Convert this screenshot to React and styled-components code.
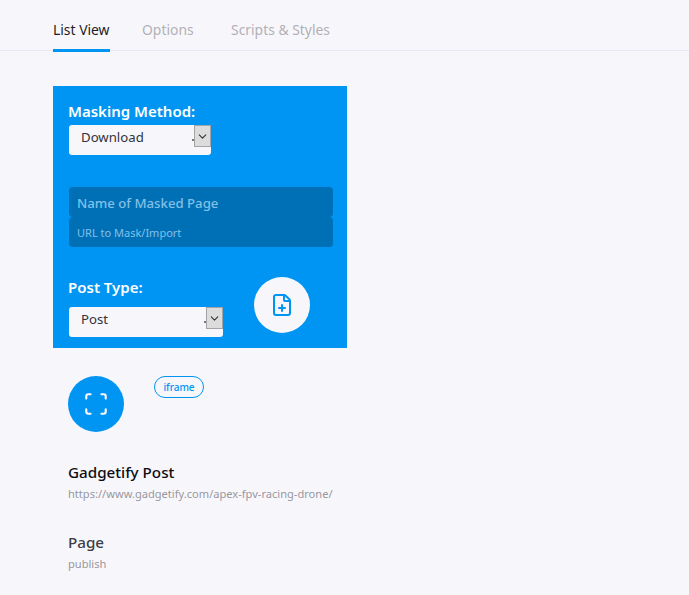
import { createGlobalStyle } from "styled-components";
import styled from "styled-components";
import { FilePlus, Scan, ChevronDown } from "lucide-react";

const GlobalStyle = createGlobalStyle`
  html, body {
    margin: 0;
    padding: 0;
    height: 100%;
    overflow: hidden;
    background: #f7f7fb;
    font-family: "Noto Sans", "Open Sans", sans-serif;
  }
`;

const BLUE = "#0095f2";

const Page = styled.div`
  width: 689px;
  height: 595px;
  padding-top: 15px;
  box-sizing: border-box;
`;

const Tabs = styled.nav`
  display: flex;
  height: 36px;
  padding-left: 53px;
  border-bottom: 1px solid #e6e6f6;
  box-sizing: border-box;
`;

const Tab = styled.div`
  width: ${(p) => p.$width}px;
  margin-right: ${(p) => p.$gap}px;
  height: 37px;
  box-sizing: border-box;
  padding-top: 5px;
  font-size: 13.9px;
  line-height: 20px;
  white-space: nowrap;
  color: ${(p) => (p.$active ? "#1d1d25" : "#b3b0b6")};
  border-bottom: ${(p) => (p.$active ? `3px solid ${BLUE}` : "none")};
`;

const Panel = styled.section`
  width: 294px;
  height: 262px;
  margin: 35px 0 0 53px;
  padding: 15px 15px 0;
  box-sizing: border-box;
  background: ${BLUE};
`;

const Label = styled.div`
  font-size: 15px;
  line-height: 20px;
  font-weight: 600;
  color: #fff;
`;

const Select = styled.div`
  position: relative;
  width: ${(p) => p.$width}px;
  height: 30px;
  margin-left: 1px;
  margin-top: ${(p) => p.$top}px;
  padding-left: 12px;
  box-sizing: border-box;
  background: #f7f7fb;
  border-radius: 3px;
  font-size: 13.2px;
  line-height: 24px;
  color: #33333b;
`;

const SelectArrow = styled.span`
  position: absolute;
  top: 0;
  right: 0;
  width: 17px;
  height: 22px;
  box-sizing: border-box;
  display: flex;
  align-items: center;
  justify-content: center;
  background: #dcdcdc;
  border: 1px solid #a4a4a4;
  color: #333;

  &::before {
    content: "";
    position: absolute;
    left: -3px;
    top: 13px;
    width: 2px;
    height: 2px;
    background: #77777d;
  }
`;

const Fields = styled.div`
  display: flex;
  flex-direction: column;
  margin: 32px 0 0 1px;
  width: 264px;
`;

const Field = styled.div`
  height: 30px;
  padding-left: 8px;
  box-sizing: border-box;
  background: #0070b6;
  border-radius: 4px;
  color: #82c0e8;
  font-size: ${(p) => p.$size}px;
  font-weight: ${(p) => p.$weight};
  line-height: 32px;
`;

const TypeRow = styled.div`
  display: flex;
  justify-content: space-between;
  align-items: flex-start;
  margin-top: 30px;
  padding-right: 22px;
`;

const CircleButton = styled.div`
  width: 56px;
  height: 56px;
  border-radius: 50%;
  display: flex;
  align-items: center;
  justify-content: center;
  flex-shrink: 0;
  background: ${(p) => (p.$filled ? BLUE : "#f7f7fb")};
  color: ${(p) => (p.$filled ? "#f7f7fb" : BLUE)};
`;

const Item = styled.div`
  margin-left: 68px;
  padding-top: 28px;
`;

const ItemHead = styled.div`
  display: flex;
  align-items: flex-start;
  gap: 30px;
`;

const Badge = styled.span`
  width: 50px;
  height: 22px;
  box-sizing: border-box;
  border: 1px solid ${BLUE};
  border-radius: 11px;
  color: ${BLUE};
  font-size: 10px;
  font-weight: 500;
  line-height: 21px;
  text-align: center;
`;

const Title = styled.div`
  margin-top: ${(p) => p.$top}px;
  font-size: 15.2px;
  line-height: 20px;
  font-weight: 500;
  color: ${(p) => p.$color};
`;

const Sub = styled.div`
  margin-top: 4px;
  font-size: 11.1px;
  line-height: 16px;
  color: #97979f;
  white-space: nowrap;
`;

export default function App() {
  return (
    <>
      <GlobalStyle />
      <Page>
        <Tabs>
          <Tab $active $width={57} $gap={32}>List View</Tab>
          <Tab $width={57} $gap={32}>Options</Tab>
          <Tab $width={100} $gap={0}>Scripts &amp; Styles</Tab>
        </Tabs>
        <Panel>
          <Label>Masking Method:</Label>
          <Select $width={142} $top={4}>
            Download
            <SelectArrow><ChevronDown size={13} strokeWidth={2} /></SelectArrow>
          </Select>
          <Fields>
            <Field $size={13.2} $weight={500}>Name of Masked Page</Field>
            <Field $size={11} $weight={400}>URL to Mask/Import</Field>
          </Fields>
          <TypeRow>
            <div>
              <Label>Post Type:</Label>
              <Select $width={154} $top={10}>
                Post
                <SelectArrow><ChevronDown size={13} strokeWidth={2} /></SelectArrow>
              </Select>
            </div>
            <CircleButton><FilePlus size={24} strokeWidth={2} /></CircleButton>
          </TypeRow>
        </Panel>
        <Item>
          <ItemHead>
            <CircleButton $filled><Scan size={26} strokeWidth={2} /></CircleButton>
            <Badge>iframe</Badge>
          </ItemHead>
          <Title $top={30} $color="#0c0c12">Gadgetify Post</Title>
          <Sub>https://www.gadgetify.com/apex-fpv-racing-drone/</Sub>
          <Title $top={30} $color="#3d3d47">Page</Title>
          <Sub>publish</Sub>
        </Item>
      </Page>
    </>
  );
}
